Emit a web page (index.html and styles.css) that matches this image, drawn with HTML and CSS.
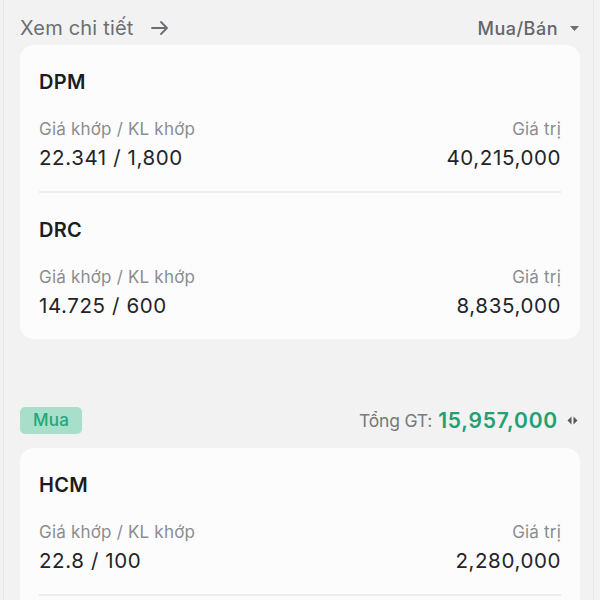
FILE: index.html
```html
<!DOCTYPE html>
<html lang="vi">
<head>
<meta charset="utf-8">
<link rel="stylesheet" href="styles.css">
</head>
<body>
<div class="screen">
  <div class="topbar">
    <div class="link">Xem chi tiết
      <svg class="arrow" width="20" height="16" viewBox="0 0 20 16"><path d="M2 8h15M11 2l6 6-6 6" fill="none" stroke="#6b6e73" stroke-width="1.8" stroke-linecap="round" stroke-linejoin="round"/></svg>
    </div>
    <div class="select">Mua/Bán
      <svg class="caret" width="9" height="5" viewBox="0 0 9 5"><path d="M0 0h9L4.5 5z" fill="#6b6e73"/></svg>
    </div>
  </div>

  <div class="card">
    <div class="item">
      <div class="sym">DPM</div>
      <div class="row">
        <div class="col"><div class="lbl">Giá khớp / KL khớp</div><div class="val">22.341 / 1,800</div></div>
        <div class="col right"><div class="lbl">Giá trị</div><div class="val">40,215,000</div></div>
      </div>
    </div>
    <div class="item">
      <div class="sym">DRC</div>
      <div class="row">
        <div class="col"><div class="lbl">Giá khớp / KL khớp</div><div class="val">14.725 / 600</div></div>
        <div class="col right"><div class="lbl">Giá trị</div><div class="val">8,835,000</div></div>
      </div>
    </div>
  </div>

  <div class="group-head">
    <span class="badge">Mua</span>
    <div class="total">
      <span class="total-lbl">Tổng GT:</span>
      <span class="total-val">15,957,000</span>
      <svg class="swap" width="11" height="9" viewBox="0 0 11 9"><path d="M4.5 0.5L0.5 4.5l4 4z M6.5 0.5l4 4-4 4z" fill="#55585d"/></svg>
    </div>
  </div>

  <div class="card">
    <div class="item">
      <div class="sym">HCM</div>
      <div class="row">
        <div class="col"><div class="lbl">Giá khớp / KL khớp</div><div class="val">22.8 / 100</div></div>
        <div class="col right"><div class="lbl">Giá trị</div><div class="val">2,280,000</div></div>
      </div>
    </div>
    <div class="item empty"></div>
  </div>
</div>
</body>
</html>
```
FILE: styles.css
```css
html, body {
  margin: 0;
  padding: 0;
  background: #f2f2f2;
}
body {
  font-family: Inter, "Noto Sans", sans-serif;
  color: #222325;
  overflow: hidden;
  height: 600px;
}
.screen {
  border-left: 1px solid #e6e6e6;
  border-right: 1px solid #e6e6e6;
  margin: 0 6px 0 3px;
  padding: 0 13px 0 16px;
}
.topbar {
  height: 45px;
  display: flex;
  align-items: center;
  justify-content: space-between;
  padding-top: 11px;
  box-sizing: border-box;
}
.link {
  font-size: 20px;
  color: #6b6e73;
  display: flex;
  align-items: center;
  gap: 16px;
  letter-spacing: 0.2px;
}
.select {
  font-size: 18px;
  color: #63666b;
  display: flex;
  align-items: center;
  gap: 12px;
  font-weight: 500;
  letter-spacing: 0.5px;
  padding-right: 1px;
}
.card {
  background: #fcfcfc;
  border-radius: 14px;
  padding: 0 19px;
}
.item {
  padding: 22px 0 18px;
  border-bottom: 2px solid #ececec;
}
.item:last-child {
  border-bottom: none;
}
.item.empty {
  height: 40px;
  padding: 0;
}
.sym {
  font-size: 20px;
  font-weight: 600;
  line-height: 30px;
  color: #1c1d1f;
  letter-spacing: 0.3px;
}
.row {
  display: flex;
  justify-content: space-between;
  margin-top: 21px;
}
.col.right {
  text-align: right;
}
.lbl {
  font-size: 17px;
  color: #8a8c91;
  line-height: 22px;
  letter-spacing: 0.2px;
}
.val {
  font-size: 20.5px;
  line-height: 30px;
  margin-top: 3px;
  color: #232427;
  letter-spacing: 0.6px;
}
.group-head {
  margin-top: 66px;
  height: 30px;
  display: flex;
  align-items: center;
  justify-content: space-between;
  margin-bottom: 13px;
}
.badge {
  background: #a8dfcb;
  color: #22a877;
  font-size: 17px;
  font-weight: 500;
  border-radius: 5px;
  padding: 2px 13px;
  line-height: 23px;
  letter-spacing: 0.3px;
}
.total {
  display: flex;
  align-items: center;
}
.total-lbl {
  font-size: 17.5px;
  color: #76797e;
  letter-spacing: -0.2px;
}
.total-val {
  font-size: 21px;
  font-weight: 600;
  color: #22a070;
  margin-left: 6px;
  letter-spacing: 0.8px;
}
.swap {
  margin-left: 9px;
  margin-right: 2px;
}
```
